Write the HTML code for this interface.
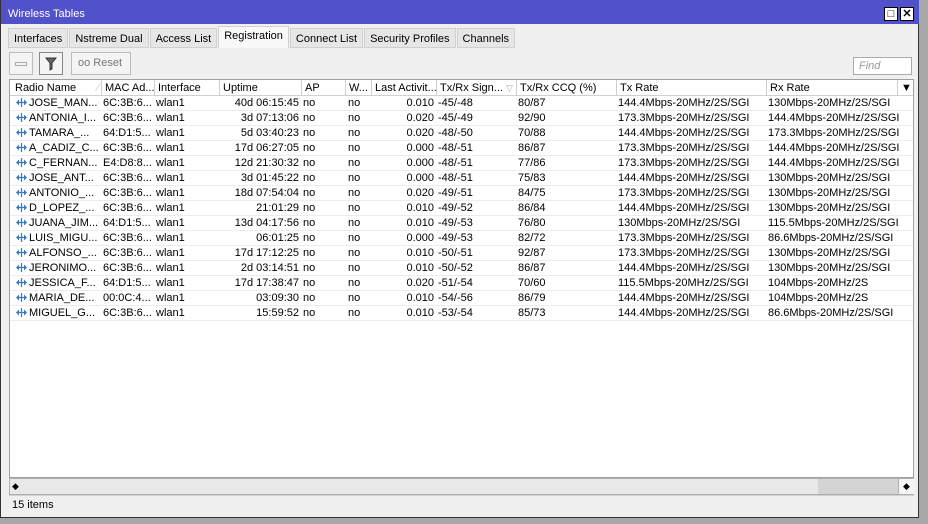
<!DOCTYPE html>
<html><head><meta charset="utf-8"><style>
*{box-sizing:border-box;margin:0;padding:0}
body{width:928px;height:524px;background:#a8a8a8;font-family:"Liberation Sans",Arial,sans-serif;font-size:11px;color:#000;position:relative;overflow:hidden}
.win{position:absolute;left:0;top:0;width:919px;height:518px;background:#f0f0f0;border:1px solid #333;border-top:0}
.title{position:absolute;left:0;top:0;width:918px;height:24px;background:#5151c9;color:#fff;font-size:11px;padding:8px 0 0 7px}
.tb{position:absolute;top:7px;width:14px;height:14px;background:#fff;border:1px solid #000;font-size:11px;line-height:12px;text-align:center;color:#000;font-weight:bold}
.tabs{position:absolute;left:7px;top:28px;height:20px;display:flex}
.tab{height:20px;border:1px solid #d0d0d0;background:#e6e6e6;padding:4px 5px 0 5px;margin-right:1px;white-space:nowrap}
.tab.act{background:#f8f8f8;height:22px;margin-top:-2px;padding-top:3px;border-bottom:0}
.btn{position:absolute;top:52px;height:23px;border:1px solid #bcbcbc;background:#f4f4f4}
.find{position:absolute;left:852px;top:57px;width:59px;height:18px;background:#fff;border:1px solid #aaa;color:#999;font-style:italic;padding:2px 0 0 5px}
.tbl{position:absolute;left:8px;top:79px;width:905px;height:399px;background:#fff;border:1px solid #a0a0a0;overflow:hidden}
.row{position:absolute;left:0;height:15px;width:905px;border-bottom:1px solid #ececec}
.row>span{position:absolute;top:1px;white-space:nowrap;overflow:hidden;line-height:13px}
.hdr{top:0;height:16px;background:#fff;border-bottom:1px solid #d0d0d0}
.hdr>span{border-left:1px solid #d0d0d0;height:16px;top:0;padding:2px 0 0 3px}
.r{text-align:right}
.ic{vertical-align:-2px;margin-right:1px}
.sb{position:absolute;left:8px;top:478px;width:905px;height:17px;background:#e8e8e8;border:1px solid #b0b0b0}
.status{position:absolute;left:8px;top:495px;width:905px;height:18px;border-top:1px solid #d0d0d0;padding:3px 0 0 3px}
i{font-style:normal}
</style></head><body>
<div class="win">
<div class="title">Wireless Tables
<div class="tb" style="left:883px">□</div><div class="tb" style="left:899px">✕</div></div>
<div class="tabs">
<div class="tab">Interfaces</div><div class="tab">Nstreme Dual</div><div class="tab">Access List</div><div class="tab act">Registration</div><div class="tab">Connect List</div><div class="tab">Security Profiles</div><div class="tab">Channels</div>
</div>
<div class="btn" style="left:8px;width:24px"><div style="position:absolute;left:5px;top:9px;width:12px;height:4px;border:1px solid #aaa"></div></div>
<div class="btn" style="left:38px;width:24px;border-color:#888"><svg width="22" height="21" style="position:absolute;left:0;top:0"><path d="M6 5h10l-4 5v6l-2 1v-7z" fill="#666" stroke="#333" stroke-width="1"/></svg></div>
<div class="btn" style="left:70px;width:60px;color:#777;padding:4px 0 0 6px">oo&nbsp;Reset</div>
<div class="find">Find</div>
<div class="tbl">
<div class="row hdr">
<span style="left:0;width:91px;border-left:0;padding-left:5px">Radio Name <i style="color:#ccc;margin-left:18px">⁄</i></span>
<span style="left:91px;width:53px">MAC Ad...</span>
<span style="left:144px;width:65px">Interface</span>
<span style="left:209px;width:82px">Uptime</span>
<span style="left:291px;width:44px">AP</span>
<span style="left:335px;width:26px">W...</span>
<span style="left:361px;width:65px">Last Activit...</span>
<span style="left:426px;width:80px">Tx/Rx Sign... <i style="color:#aaa;font-size:9px">▽</i></span>
<span style="left:506px;width:100px">Tx/Rx CCQ (%)</span>
<span style="left:606px;width:150px">Tx Rate</span>
<span style="left:756px;width:131px">Rx Rate</span>
<span style="left:887px;width:18px;padding-left:3px">▼</span>
</div>
<div id="rows"></div>
</div>
<div class="sb">
<div style="position:absolute;left:0;top:0;width:14px;height:15px;font-size:9px;padding:2px 0 0 2px">◆</div>
<div style="position:absolute;left:808px;top:0;width:80px;height:15px;background:#d4d4d4"></div>
<div style="position:absolute;left:888px;top:0;width:16px;height:15px;background:#f4f4f4;border-left:1px solid #b0b0b0;font-size:9px;padding:2px 0 0 4px">◆</div>
</div>
<div class="status">15 items</div>
</div>
<script>
var d=[
["JOSE_MAN...","6C:3B:6...","40d 06:15:45","0.010","-45/-48","80/87","144.4Mbps-20MHz/2S/SGI","130Mbps-20MHz/2S/SGI"],
["ANTONIA_I...","6C:3B:6...","3d 07:13:06","0.020","-45/-49","92/90","173.3Mbps-20MHz/2S/SGI","144.4Mbps-20MHz/2S/SGI"],
["TAMARA_...","64:D1:5...","5d 03:40:23","0.020","-48/-50","70/88","144.4Mbps-20MHz/2S/SGI","173.3Mbps-20MHz/2S/SGI"],
["A_CADIZ_C...","6C:3B:6...","17d 06:27:05","0.000","-48/-51","86/87","173.3Mbps-20MHz/2S/SGI","144.4Mbps-20MHz/2S/SGI"],
["C_FERNAN...","E4:D8:8...","12d 21:30:32","0.000","-48/-51","77/86","173.3Mbps-20MHz/2S/SGI","144.4Mbps-20MHz/2S/SGI"],
["JOSE_ANT...","6C:3B:6...","3d 01:45:22","0.000","-48/-51","75/83","144.4Mbps-20MHz/2S/SGI","130Mbps-20MHz/2S/SGI"],
["ANTONIO_...","6C:3B:6...","18d 07:54:04","0.020","-49/-51","84/75","173.3Mbps-20MHz/2S/SGI","130Mbps-20MHz/2S/SGI"],
["D_LOPEZ_...","6C:3B:6...","21:01:29","0.010","-49/-52","86/84","144.4Mbps-20MHz/2S/SGI","130Mbps-20MHz/2S/SGI"],
["JUANA_JIM...","64:D1:5...","13d 04:17:56","0.010","-49/-53","76/80","130Mbps-20MHz/2S/SGI","115.5Mbps-20MHz/2S/SGI"],
["LUIS_MIGU...","6C:3B:6...","06:01:25","0.000","-49/-53","82/72","173.3Mbps-20MHz/2S/SGI","86.6Mbps-20MHz/2S/SGI"],
["ALFONSO_...","6C:3B:6...","17d 17:12:25","0.010","-50/-51","92/87","173.3Mbps-20MHz/2S/SGI","130Mbps-20MHz/2S/SGI"],
["JERONIMO...","6C:3B:6...","2d 03:14:51","0.010","-50/-52","86/87","144.4Mbps-20MHz/2S/SGI","130Mbps-20MHz/2S/SGI"],
["JESSICA_F...","64:D1:5...","17d 17:38:47","0.020","-51/-54","70/60","115.5Mbps-20MHz/2S/SGI","104Mbps-20MHz/2S"],
["MARIA_DE...","00:0C:4...","03:09:30","0.010","-54/-56","86/79","144.4Mbps-20MHz/2S/SGI","104Mbps-20MHz/2S"],
["MIGUEL_G...","6C:3B:6...","15:59:52","0.010","-53/-54","85/73","144.4Mbps-20MHz/2S/SGI","86.6Mbps-20MHz/2S/SGI"]];
var ic='<svg class="ic" width="13" height="11" viewBox="0 0 13 11"><path d="M1 5.5l3-3v6zM12 5.5l-3-3v6z" fill="#3a78c0"/><path d="M4 5.5h5M6.5 1v9" stroke="#3a78c0" stroke-width="1.2"/></svg>';
var h="";
d.forEach(function(r,i){var t=16+i*15;
h+='<div class="row" style="top:'+t+'px">'+
'<span style="left:5px;width:86px">'+ic+r[0]+'</span>'+
'<span style="left:93px;width:51px">'+r[1]+'</span>'+
'<span style="left:146px">wlan1</span>'+
'<span class="r" style="left:209px;width:80px">'+r[2]+'</span>'+
'<span style="left:293px">no</span><span style="left:338px">no</span>'+
'<span class="r" style="left:361px;width:63px">'+r[3]+'</span>'+
'<span style="left:428px">'+r[4]+'</span>'+
'<span style="left:508px">'+r[5]+'</span>'+
'<span style="left:608px">'+r[6]+'</span>'+
'<span style="left:758px">'+r[7]+'</span></div>';});
document.getElementById("rows").innerHTML=h;
</script>
</body></html>
